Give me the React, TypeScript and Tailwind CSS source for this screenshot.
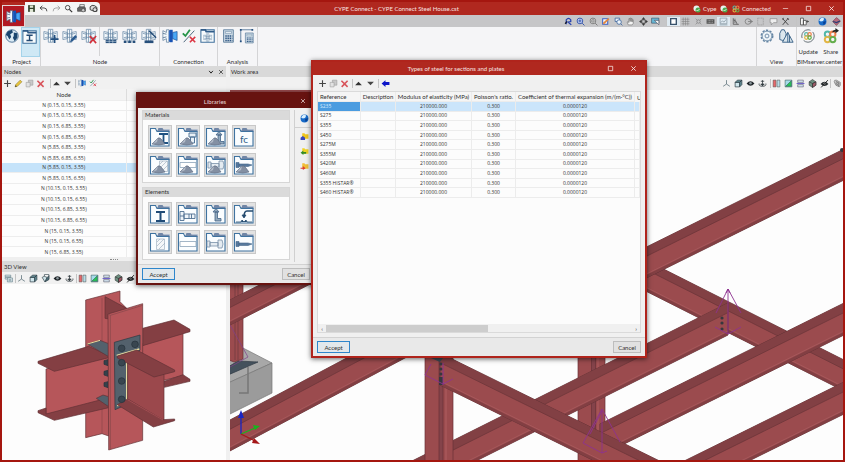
import type { ReactNode } from "react";

const glyphs: Record<string, ReactNode> = {
  save: <g fill="#33412b"><path d="M2 2h12v12H2z" /><path fill="#dfe6d5" d="M5 2.500h6v4H5zM5 9h6v5H5z" /></g>,
  undo: <path d="M6 3L2 7l4 4M2 7h7q5 0 5 6" fill="none" stroke="#333" strokeWidth="1.500" />,
  redo: <path d="M10 3l4 4-4 4M14 7H7q-5 0-5 6" fill="none" stroke="#999" strokeWidth="1.500" />,
  search: <g fill="none" stroke="#333" strokeWidth="1.500"><circle cx="6.500" cy="6.500" r="4" /><path strokeWidth="2.200" d="M9.500 9.500l5 5" /></g>,
  printer: <g fill="#666" stroke="#333"><path fill="#eee" d="M5 6V1h8v5" /><path d="M1 7l3-2h9l2 2v6H1z" /><circle cx="11" cy="11" r="3" fill="#ccc" /></g>,
  camera: <g fill="#ddd" stroke="#333" strokeWidth="1.600"><path d="M2 5q3-4 8-2l4 3v7H9L2 10z" /><circle cx="10.500" cy="10" r="3.500" /></g>,
  plus: <path d="M8 2v12M2 8h12" stroke="#444" strokeWidth="2" />,
  pencil: <g><path d="M3 10l8-8 3 3-8 8-4 1z" fill="#e8c53a" stroke="#8b7420" /><path d="M2 14l1-3 2 2z" fill="#333" /></g>,
  copy: <g fill="#c9c9c9" stroke="#999"><path d="M6 2h8v9H6z" /><path fill="#e2e2e2" d="M2 6h7v8H2z" /></g>,
  del: <path d="M2.500 3l11 11M13.500 3L3 14" stroke="#d8535a" strokeWidth="2.800" />,
  up: <path d="M2 11l6-6 6 6z" fill="#333" />,
  down: <path d="M2 5h12l-6 6z" fill="#444" />,
  left: <path d="M8 2L1 8l7 6v-3.500h7v-5H8z" fill="#0d16c9" />,
  close: <path d="M3 3l10 10M13 3L3 13" stroke="currentColor" strokeWidth="2" />,
  box: <path d="M3 3h10v10H3z" stroke="currentColor" strokeWidth="1.800" fill="none" />,
  min: <path d="M2 8h12" stroke="currentColor" strokeWidth="1.500" />,
  chev: <path d="M3 5l5 6 5-6" fill="none" stroke="#222" strokeWidth="2.600" />,
  axes: <path d="M8 2v7l-6 4M8 9l6 4" fill="none" stroke="#60747c" strokeWidth="1.400" />,
  cube: <g stroke="#33434b" strokeWidth="1.300"><path fill="#d0e6ec" d="M2 6h8v8H2z" /><path fill="#5f8891" d="M2 6l4-4h8l-4 4zM10 6l4-4v8l-4 4z" /></g>,
  cubes: <g stroke="#33434b" strokeWidth="1.200"><path fill="#fff" d="M6 1h8v8H6z" /><path fill="#cfe3e8" d="M2 6l4-2 5 2-4 8z" /><path fill="#4d6f7a" d="M11 6l3-3v7l-7 4z" /></g>,
  layers: <g fill="#e2ecef" stroke="#53727f"><path d="M2 2h10v3H2zM2 6h10v3H2z" /><path d="M6 7h9v7H6z" /><path d="M8 10h5M8 12h5" /></g>,
  eye: <g><path d="M1 8q7-8 14 0-7 8-14 0z" fill="#20262a" /><circle cx="8" cy="7.500" r="2.200" fill="#8d999d" /></g>,
  noeye: <g><path d="M1 9q7-8 14 0-7 7-14 0z" fill="#24292c" /><circle cx="8" cy="8" r="2" fill="#aaa" /><path d="M2 15L14 2" stroke="#111" strokeWidth="1.500" /></g>,
  turn: <g fill="none" stroke="#303a3f" strokeWidth="1.400"><path d="M8 2v10M5 4h6M2 8q-1 5 6 5t6-5" /><path fill="#303a3f" d="M5 9l3 3 3-3z" /></g>,
  secRed: <g stroke="#555"><path fill="#e8676a" d="M2 2h5v12H2z" /><path fill="#b5dde8" d="M9 2h5v12H9z" /></g>,
  secGreen: <g stroke="#355"><path fill="#a5dbe9" d="M2 2h12v12H2z" /><path fill="#26c755" d="M3 13L13 3v10z" /></g>,
  secBlue: <g stroke="#556"><path fill="#d3e4f0" d="M3 2h10v4H3zM3 10h10v4H3z" /><path d="M1 8h14" stroke="#7164c9" strokeWidth="2" /></g>,
  hex: <g stroke="#333"><path fill="#6c8f80" d="M8 1l6 4v6l-6 4-6-4V5z" /><path fill="#a05a68" d="M8 8l6-3v6l-6 4z" /><path d="M2 5l6 3v7M8 8l6-3" fill="none" /></g>,
  shells: <g fill="#ccc" stroke="#666"><path d="M2 5q0-4 4-3l7 4v5l-2 3-6-3z" /><path d="M5 4l7 5M4 7l7 5M7 3v9M10 5v8" /></g>,
  zoomF: <g stroke="#233fae" strokeWidth="2.200" fill="none"><path d="M4 13V5q4-5 8 0v3l-5 1 6 5" /><path d="M2 12l3-4" stroke="#111" /></g>,
  zoomA: <g stroke="#3152a9" strokeWidth="1.700" fill="#dbe6ff"><circle cx="7" cy="7" r="5" /><path d="M11 11l4 4M7 4v6M4 7h6" /></g>,
  zoomW: <g stroke="#666" strokeWidth="1.400" fill="#eee"><circle cx="7" cy="7" r="5" /><path d="M11 11l4 4M5 5h4v4H5z" /></g>,
  redraw: <g strokeWidth="1.800"><path d="M3 3h9v10H3z" fill="#f8f8f8" stroke="#345bc4" /><path d="M4 12L14 3" stroke="#e2873d" strokeWidth="3" /></g>,
  zoomP: <g stroke="#436a9f" strokeWidth="1.500" fill="#edf4fa"><path d="M2 2h8v6H2z" /><circle cx="9" cy="9" r="4" /><path d="M12 12l3 3" /></g>,
  hand: <path d="M4 14L2 9l2-1 1 2V3h2v5V2h2v6V3h2v6V5h2v6l-2 3z" fill="#f5f5f5" stroke="#666" />,
  move: <g fill="none" stroke="#333" strokeWidth="1.200"><path d="M8 1L6 4h4zM8 15l-2-3h4zM1 8l3-2v4zM15 8l-3-2v4z" fill="#444" /><path d="M5 5h6v6H5z" /></g>,
  full: <g><path d="M1 2h13v9H1z" fill="#67b7d5" stroke="#345" /><path d="M6 6h8v8z" fill="#f2f2f2" stroke="#445" /></g>,
  square: <path d="M3 3h10v10H3z" fill="#fff" stroke="#37516b" strokeWidth="2.400" />,
  grid: <path d="M4 1v14M8 1v14M12 1v14M1 4h14M1 8h14M1 12h14" stroke="#808080" />,
  snap: <g fill="none" stroke="#777" strokeWidth="1.200"><circle cx="8" cy="8" r="3" /><path d="M3 3l2 2M13 3l-2 2M3 13l2-2M13 13l-2-2" /></g>,
  keys: <g><path d="M1 4h14v8H1z" fill="#555" /><path d="M3 6.500h10M3 9.500h10" stroke="#ddd" strokeDasharray="1.500 1" /></g>,
  chart: <g fill="none" stroke="#8595a1" strokeWidth="1.300"><path d="M2 2h12v10H2zM1 14h14" /><path d="M3 10l3-3 3 2 4-5" /></g>,
  angle: <path d="M4 2v11h10M4 5q6 1 7 8M7 3v8" fill="none" stroke="#555" strokeWidth="1.300" />,
  arc: <g fill="none" stroke="#777" strokeWidth="1.300"><circle cx="7" cy="8" r="5" /><path d="M7 8h8M11 5l4 3-4 3" /></g>,
  dash: <path d="M3 2h10v12H3z" fill="none" stroke="#999" strokeWidth="1.300" strokeDasharray="2 1" />,
  note: <path d="M2 3h12v7H8l-4 4v-4H2z" fill="#eee" stroke="#777" />,
  tools: <path d="M3 3l10 11M13 2L3 14M2 4l3-2M11 2l3 3" stroke="#444" strokeWidth="1.700" />,
  panels: <g fill="#fff" stroke="#444" strokeWidth="1.400"><path d="M1 2h5v12H1zM6 6h5v8H6z" /><path d="M11 8h5M13 6v4" /></g>,
  globe: <g><circle cx="8" cy="8" r="7" fill="#176ac8" /><path d="M4 3q4-3 7 0L9 7 5 8 2 6z" fill="#d8efff" /><path d="M9 9l5-2q0 5-4 7z" fill="#083e91" /></g>,
  cyc: <g stroke="#743644"><path d="M8 1l7 6-7 8-7-7z" fill="#b66a7d" /><path d="M2 8l6 2 6-3" stroke="#243d75" strokeWidth="2" fill="none" /></g>,
  check: <g><circle cx="7" cy="7" r="6" fill="#e7f4ef" /><circle cx="10" cy="10" r="5" fill="#4eaa50" /><path d="M7 10l2 2 4-4" stroke="#fff" strokeWidth="1.500" fill="none" /></g>,
  bim: <g fill="none" strokeWidth="2.200"><circle cx="5" cy="5" r="3" stroke="#51b8a8" /><circle cx="11" cy="5" r="3" stroke="#ef7f49" /><circle cx="5" cy="11" r="3" stroke="#e2b646" /><circle cx="11" cy="11" r="3" stroke="#64ae4d" /></g>,
  folderUp: <g><path d="M4 5V2h4l1 2h6v8H4z" fill="#f0c61c" /><path d="M1 14v-4l4-3 4 3v4z" fill="#3847bc" /></g>,
  folderIn: <g><path d="M4 5V2h4l1 2h6v8H4z" fill="#f0d328" /><path d="M1 10l5-4v3h5v3H6v2z" fill="#338c25" /></g>,
  folderOut: <g><path d="M4 5V2h4l1 2h6v8H4z" fill="#f1bf37" /><path d="M10 11L5 7v3H1v2h4v2z" fill="#dd3c34" /></g>,
};

const joint = (
  <g fill="#f4f9fc" stroke="#6484a3" strokeWidth="0.8">
    <path d="M6 1.500h5V16H6zM1 4l5 1v7l-5 1zM16 4l-5 1v7l5 1z" />
    <path d="M2 6l4 1M2 11l4-1M15 6l-4 1M15 11l-4-1M8.500 2v14M6 6.500h5M6 10.500h5" />
  </g>
);

const blueJoint = (
  <g>
    <path d="M1 3l4 2V2h3v14H5v-4l-4 2z" fill="#f4f9fc" stroke="#5c7b98" strokeWidth="0.800" />
    <path d="M1 6l4 1M1 11l4-1" stroke="#5c7b98" />
    <path d="M8 3h3v12H8z" fill="#2f7be2" stroke="#1c4792" strokeWidth="0.700" />
    <path d="M12 5l5-1v10l-5-2z" fill="#49a6f5" stroke="#14478d" strokeWidth="0.700" />
    <path d="M9 2h3v14H9z" fill="#1753b5" />
  </g>
);

const folder = (
  <g>
    <path d="M1 2h15v14H1z" fill="#f7fbfd" stroke="#41719d" strokeWidth="1.200" />
    <path d="M1 2h5l1 2h9" fill="none" stroke="#315c89" strokeWidth="2" />
  </g>
);

const calc = (
  <g>
    <path d="M4 2h11v14H4z" fill="#cbd9e4" stroke="#5f7f9d" />
    <path d="M6 4h7v2H6z" fill="#f5fafc" stroke="#5f7f9d" strokeWidth="0.600" />
    <path d="M6 9h8M6 11.500h8M6 14h8" stroke="#2e5582" strokeWidth="1.600" strokeDasharray="1.600 0.800" />
  </g>
);

const ribbonGlyphs: Record<string, ReactNode> = {
  world: <g><circle cx="9" cy="9" r="7" fill="#dcebf5" stroke="#456b90" /><path d="M4 4l5-2 1 3-3 2 1 3-2 3-2-4-2-1zM11 5l4 1v5l-3 4-2-4 1-2z" fill="#1b456f" /></g>,
  profile: <g>{folder}<path d="M5 7h7M8.500 7v6M5 13h7" stroke="#244b74" strokeWidth="1.600" /></g>,
  nodeAdd: <g>{joint}<path d="M13 8v9M8.500 12.500h9" stroke="#234f7f" strokeWidth="2" /></g>,
  nodeEdit: <g>{joint}<path d="M9 16l1-3 5-5 2 2-5 5z" fill="#2b5a8e" /></g>,
  nodeDel: <g>{joint}<path d="M10 9l7 8M17 9l-7 8" stroke="#d2303a" strokeWidth="1.800" /></g>,
  nodeA: <g>{joint}<path d="M3 13h12v4H3z" fill="#274f7b" /><path d="M3 15h12M7 13v4M11 13v4" stroke="#dce8f2" strokeWidth="0.600" /></g>,
  nodeB: <g>{joint}<path d="M2 14h3v3H2zM7 14h3v3H7zM12 14h3v3h-3z" fill="#274f7b" /></g>,
  nodeC: <g>{joint}<path d="M4 14h10v3H4z" fill="#274f7b" /><path d="M9 3l8 8" stroke="#1f4875" strokeWidth="1.500" /></g>,
  conn: blueJoint,
  verify: <g fill="none"><path d="M2 6l3 3 5-7" stroke="#269449" strokeWidth="2" /><path d="M3 16L15 3" stroke="#39566f" /><path d="M10 10l6 6M16 10l-6 6" stroke="#dc3644" strokeWidth="1.800" /></g>,
  connFolder: <g>{folder}<g transform="translate(3.500 5.500) scale(0.600)">{joint}</g></g>,
  calc,
  calcSel: <g><path d="M2 15V2h13" fill="none" stroke="#44698f" strokeWidth="0.900" /><path d="M1 1h2v2H1zM14 1h2v2h-2zM1 14h2v2H1z" fill="#244f7e" /><g transform="translate(4 4) scale(0.800)">{calc}</g></g>,
  gear: <g fill="#eef4f8" stroke="#6585a3"><circle cx="9" cy="9" r="6.500" strokeWidth="1.600" strokeDasharray="2.500 1.600" /><circle cx="9" cy="9" r="5.500" /><circle cx="9" cy="9" r="2.200" /></g>,
  shapes: <g fill="#dce7ee" stroke="#315b83"><path d="M4 2h3l2 4v7q-4 2-7 0V6z" /><path d="M11 5l6 11H5z" /><path d="M11 5v11M13 9v7" /></g>,
  update: <g><circle cx="9" cy="9" r="7" fill="none" stroke="#58636a" strokeDasharray="16 3" /><g transform="translate(4 4) scale(0.620)">{glyphs.bim}</g></g>,
  share: <g><g transform="translate(0 2)">{glyphs.bim}</g><path d="M10 5q1-3 4-3V0l4 3-4 3V4z" fill="#222" /></g>,
};

function Icon({ name, className = "size-[9px]" }: { name: string; className?: string }) {
  return <svg viewBox="0 0 16 16" className={className} aria-hidden="true">{glyphs[name]}</svg>;
}

function Tool({ name }: { name: string }) {
  return (
    <button type="button" aria-label={name} className="flex flex-1 items-center justify-center">
      <Icon name={name} />
    </button>
  );
}

function Divider() {
  return <span className="h-[9px] w-px shrink-0 bg-[#c4c4c4]" />;
}

function RibbonButton({ name, active = false, label }: { name: string; active?: boolean; label?: string }) {
  return (
    <button
      type="button"
      aria-label={label ?? name}
      className={`flex h-[30px] flex-1 flex-col items-center pt-px ${active ? "border border-[#a5d3ea] bg-[#cfe8f5]" : ""}`}
    >
      <svg viewBox="0 0 18 18" className="size-[16px] shrink-0">{ribbonGlyphs[name]}</svg>
      {label && <span className="pt-1">{label}</span>}
    </button>
  );
}

function RibbonGroup({ title, className, children }: { title: string; className: string; children: ReactNode }) {
  return (
    <section className={`flex shrink-0 flex-col justify-between border-r border-[#d4d4d6] ${className}`}>
      <div className="flex">{children}</div>
      <h2 className="whitespace-nowrap pb-px text-center">{title}</h2>
    </section>
  );
}

const nodes = [
  "N (0.15, 0.15, 3.55)", "N (0.15, 0.15, 6.55)", "N (0.15, 6.85, 3.55)", "N (0.15, 6.85, 6.55)",
  "N (5.85, 6.85, 3.55)", "N (5.85, 6.85, 6.55)", "N (5.85, 0.15, 3.55)", "N (5.85, 0.15, 6.55)",
  "N (10.15, 0.15, 3.55)", "N (10.15, 0.15, 6.55)", "N (10.15, 6.85, 3.55)", "N (10.15, 6.85, 6.55)",
  "N (15, 0.15, 3.55)", "N (15, 0.15, 6.55)", "N (15, 6.85, 3.55)",
];

const steels = ["S235", "S275", "S355", "S450", "S275M", "S355M", "S420M", "S460M", "S355 HISTAR®", "S460 HISTAR®"];

function NodesPanel() {
  return (
    <section className="shrink-0">
      <div className="flex h-[11px] items-center bg-[#d9d9d9] px-0.5">
        <h2 className="flex-1">Nodes</h2>
        <button type="button" aria-label="Collapse" className="mr-1"><Icon name="chev" className="size-[6px]" /></button>
        <button type="button" aria-label="Close panel"><Icon name="close" className="size-[6px]" /></button>
      </div>
      <div className="flex h-[12px] items-center bg-[#f1f1f1]">
        <div className="flex w-[44px]"><Tool name="plus" /><Tool name="pencil" /><Tool name="copy" /><Tool name="del" /></div>
        <div className="ml-1 flex w-[23px] items-center"><Divider /><Tool name="up" /><Tool name="down" /></div>
        <div className="ml-0.5 flex w-[24px] items-center">
          <Divider />
          <button type="button" aria-label="Connect" className="flex flex-1 justify-center"><svg viewBox="0 0 18 18" className="size-[8px]">{blueJoint}</svg></button>
          <button type="button" aria-label="Verify" className="flex flex-1 justify-center"><svg viewBox="0 0 18 18" className="size-[8px]">{ribbonGlyphs.verify}</svg></button>
        </div>
      </div>
      <table className="h-[168px] w-full table-fixed border-collapse bg-[#fdfdfd] text-center">
        <colgroup><col className="w-[124px]" /><col /></colgroup>
        <thead>
          <tr className="h-[11px] bg-[#f3f3f3]"><th className="border-r border-[#dcdcdc] p-0 font-normal">Node</th><th className="p-0" /></tr>
        </thead>
        <tbody className="font-['Open_Sans',sans-serif] text-[5px]">
          {nodes.map((node, i) => (
            <tr key={node} className={i === 6 ? "bg-[#c5e3fa]" : "border-t border-[#ededed]"}>
              <td className="border-r border-[#ededed] p-0">{node}</td>
              <td className="p-0" />
            </tr>
          ))}
        </tbody>
      </table>
      <div className="flex h-[4px] items-center justify-center bg-[#efefef]"><span className="w-2 border-t border-dotted border-[#888]" /></div>
    </section>
  );
}

const RED = "#b6565a";
const DARK = "#843f43";
const STEEL = "#53616c";

function JointView() {
  return (
    <svg viewBox="6 0 672 525" preserveAspectRatio="xMinYMin meet" className="size-full" role="img" aria-label="3D joint">
      <g stroke="#603035" strokeWidth="2" strokeLinejoin="round">
        <path d="M257 48l103-27v32l20 20v300l-54 83-20-7-49 12z" fill={RED} />
        <path d="M315 38l65 35v40l-65-10z" fill={DARK} />
        <path d="M306 42v140M306 365v85" fill="none" stroke="#8c474a" />
        <path d="M425 180l124-33v128l-124 30z" fill={RED} />
        <path d="M428 133l94-25 48 28v7l-142 42z" fill={DARK} />
        <path d="M492 292l57-20 21 14v6l-77 18z" fill={DARK} />
        <path d="M138 255l188-50v145l-188 42z" fill={RED} />
        <path d="M114 232l152-45 60 28v6l-163 41-49-24z" fill={DARK} />
        <path d="M114 380l24-8v18l162-42 26 15v8l-163 38-49-23z" fill={DARK} />
        <path d="M262 180l38-11 26 10v39z" fill={STEEL} />
        <path d="M262 180l38-11" stroke="#e7db9c" strokeWidth="3" />
        <path d="M289 343l20-10 17 5v30z" fill={STEEL} />
        <g fill="#35414b" stroke="#26323b"><path d="M312 230l12-3v18l-12-4zM312 262l12-3v18l-12-4zM312 296l12-3v18l-12-4z" /></g>
        <path d="M324 90l104-31v410l-102 29z" fill={RED} />
        <path d="M324 90l7 4v402M331 94l97-30" fill="none" stroke="#84474a" />
        <path d="M343 175l77-22v46l-38 12v150l-37 16z" fill={STEEL} stroke="#2b3740" />
        <path d="M350 214l68-19M380 230v132l-29 3" fill="none" stroke="#e7dda2" strokeWidth="4" />
        <path d="M383 230l109 42v140l-109-57z" fill="#9b484c" />
        <path d="M352 216l58-18 114 60v5l-62 16-110-57z" fill={DARK} />
        <path d="M352 362l31-17 105 62 36-2v5l-64 19z" fill={DARK} />
        <path d="M383 347l106 61" stroke="#b6565a" />
        <g fill="#394650" stroke="#25323b">
          <circle cx="365" cy="193" r="10" /><circle cx="405" cy="181" r="10" /><circle cx="365" cy="236" r="10" /><circle cx="365" cy="291" r="10" /><circle cx="365" cy="346" r="10" />
        </g>
      </g>
    </svg>
  );
}

interface BeamProps {
  from: [number, number];
  to: [number, number];
  depth: number;
}

// A girder seen from above: shaded top flange, lit web and lower lip.
function Beam({ from: [x1, y1], to: [x2, y2], depth }: BeamProps) {
  const strip = (a: number, b: number) => `M${x1} ${y1 + a}L${x2} ${y2 + a}V${y2 + b}L${x1} ${y1 + b}z`;
  const line = (a: number) => `M${x1} ${y1 + a}L${x2} ${y2 + a}`;
  return (
    <g fill="none" strokeWidth="0.700">
      <path d={strip(0, depth)} fill="#9b4b4e" stroke="#542d31" />
      <path d={strip(0, depth * 0.3)} fill="#824044" />
      <path d={line(depth * 0.3)} stroke="#693338" />
      <path d={line(depth - 4)} stroke="#ab5d60" />
      <path d={strip(depth - 3, depth)} fill="#823f43" />
    </g>
  );
}

function Column({ x, y, width }: { x: number; y: number; width: number }) {
  return (
    <g stroke="#683238" strokeWidth="0.700">
      <path d={`M${x} ${y}h${width}v120h-${width}z`} fill="#9b4b4e" />
      <path d={`M${x + width / 2} ${y}h4v120h-4z`} fill="#84434a" />
      <path d={`M${x + width - 7} ${y}v120`} stroke="#b8696c" />
    </g>
  );
}

function Structure() {
  return (
    <svg viewBox="230 90 613 370" preserveAspectRatio="xMinYMin slice" className="size-full" role="img" aria-label="Steel structure">
      <Beam from={[228, 86]} to={[320, 86]} depth={12} />
      <g stroke="#777" strokeWidth="0.700">
        <path d="M228 352l15-4 29 15-44 20z" fill="#a8a8a8" />
        <path d="M228 383l44-20v30l-44 22z" fill="#9b9b9b" />
        <path d="M228 367l10-6 20 1-30 13z" fill="#44515c" stroke="#303b45" />
        <path d="M248 367v26h-9" fill="none" stroke="#777" strokeWidth="1.500" />
      </g>
      <path d="M229 270h14v89l-9 3-5-2z" fill="#9b4b4e" stroke="#683238" strokeWidth="0.700" />
      <path d="M235 270v90M238 270v90" stroke="#713b40" strokeWidth="0.800" />
      <path d="M230 325l18 32-18 10" fill="none" stroke="#81418c" strokeWidth="0.700" />
      <Beam from={[228, 301]} to={[330, 249]} depth={25} />
      <Beam from={[228, 421]} to={[420, 319]} depth={31} />
      <Column x={578} y={345} width={27} />
      <Beam from={[600, 237]} to={[846, 361]} depth={31} />
      <Beam from={[600, 270]} to={[846, 148]} depth={31} />
      <Beam from={[400, 467]} to={[728, 303]} depth={32} />
      <Column x={425} y={345} width={28} />
      <Beam from={[600, 424]} to={[846, 302]} depth={32} />
      <Beam from={[440, 353]} to={[680, 471]} depth={32} />
      <Beam from={[670, 468]} to={[846, 381]} depth={32} />
      <g fill="#35383e">
        <circle cx="722" cy="318" r="1.600" /><circle cx="722" cy="323" r="1.600" /><circle cx="722" cy="329" r="1.600" />
        <path d="M431 358h12l-3 4z" fill="#3c4a54" />
        <circle cx="441" cy="364" r="1.600" /><circle cx="441" cy="369" r="1.600" /><circle cx="441" cy="374" r="1.600" /><path d="M439 377h4v8h-4z" />
        <circle cx="842" cy="150" r="2" />
      </g>
      <g fill="none" stroke="#8d3290" strokeWidth="0.900">
        <path d="M728 334V289l-12 24M728 289l13 24M715 327l13 7 13-7M726 293l2-4 2 4" />
        <path d="M602 453v-44l-19 34 19 10 5-2M602 409l18 33M590 434l12-23" />
        <path d="M443 385v-22M431 364l-6 11 18 9 10-5" />
      </g>
      <g strokeWidth="1.300">
        <path d="M241 434v-17" stroke="#1825c4" /><path d="M238 418l3-8 3 8z" fill="#1825c4" />
        <path d="M241 434l14-6" stroke="#18b51d" /><path d="M253 425l7 1-5 4z" fill="#18b51d" />
        <path d="M241 434l14 7" stroke="#a51719" /><path d="M254 438l6 6-8-1z" fill="#a51719" />
      </g>
    </svg>
  );
}

const pile = (
  <g strokeWidth="0.600">
    <path d="M3 18l6-6q2-1 4 2l3 4q-6 2-13 0z" fill="#8490a3" stroke="#5b6880" />
    <path d="M9 12l-1 4-4 2z" fill="#b4bdca" />
  </g>
);
const bolt = <path d="M3 8.500h4v9H3zM3 13h4M7 11h11v4.500H7zM12 11v4.500M14.500 11v4.500" fill="#eef4f9" stroke="#507092" strokeWidth="0.900" />;
const plate = <path d="M3 10.500h16v5H3z" fill="#fff" stroke="#8ca3b9" strokeWidth="0.800" />;
const anchor = <path d="M8 9l3-3.500 3 3.500zM10 9v9h6v-2.500h-3.500V9z" fill="#94aabd" stroke="#416387" strokeWidth="0.800" />;
const nut = <path d="M2 10h3v6H2zM5 11.500h8v3.500H5zM13 9h4l1 4-1 4h-4z" fill="#e4ebf1" stroke="#7890a8" strokeWidth="0.800" />;
const screw = <path d="M3 10.500h3v5H3zM6 12h9l4 1-4 1.500H6z" fill="#57799d" stroke="#446789" strokeWidth="0.600" />;
const hatch = <path d="M7.500 8h8v10.500h-8zM8 11l3-3M8 15l7-7M10 18l6-6" fill="#f5f7f9" stroke="#96a8b9" strokeWidth="0.600" />;

const materials: [string, ReactNode][] = [
  ["Sections", <><path d="M10 8h9M14.500 8v9M11 17h8" stroke="#1f5282" strokeWidth="1.800" />{pile}</>],
  ["Bolts", <><path d="M12 7h7v4h-7zM13.500 11h4v6h-4z" fill="#e8f0f6" stroke="#456b91" strokeWidth="0.900" />{pile}</>],
  ["Anchors", <><g transform="translate(3 0)">{anchor}</g>{pile}</>],
  ["Concrete", <text x="11" y="17" textAnchor="middle" fontSize="10" fill="#315e88">fc</text>],
  ["Plates", <><g transform="translate(3 -1)">{hatch}</g>{pile}</>],
  ["Flat bars", <><g transform="translate(0 -2)">{plate}</g>{pile}</>],
  ["Nuts", <><g transform="translate(1 -2)">{nut}</g>{pile}</>],
  ["Screws", <><g transform="translate(0 -2)">{screw}</g>{pile}</>],
];

const elements: [string, ReactNode][] = [
  ["Section library", <path d="M7 9h9M11.500 9v9M7 18h9" stroke="#1f4b77" strokeWidth="2" />],
  ["Bolt library", bolt],
  ["Anchor library", anchor],
  ["Weld library", <><path d="M20 8h-6q-3 0-3 6" fill="none" stroke="#244b70" strokeWidth="1.600" /><path d="M9 12h4l-2 3zM3 19h5l1-2 2 2 2-2 1 2h5" fill="#244b70" stroke="#244b70" strokeWidth="0.800" /></>],
  ["Plate library", hatch],
  ["Flat bar library", plate],
  ["Nut library", nut],
  ["Screw library", screw],
];

function LibraryGroup({ title, items }: { title: string; items: [string, ReactNode][] }) {
  return (
    <section className="h-[73px] border border-[#d6d6d6] bg-[#fcfcfc]">
      <h3 className="h-[9px] bg-[#dadada] px-0.5 leading-[8px]">{title}</h3>
      <div className="grid w-fit grid-cols-4 gap-1 px-[5px] py-[5px]">
        {items.map(([name, art]) => (
          <button key={name} type="button" aria-label={name} className="size-[24px] border border-[#c8c8c8] bg-[#e2e2e2]">
            <svg viewBox="0 0 22 22" className="size-full">
              <path d="M1.500 3h18.500v17H1.500z" fill="#fafdff" />
              <path d="M8 5l1.500-3h4l1 1.500h6V6H9z" fill="#7186a6" />
              <path d="M1.500 20V2.500h5L8 5.500h12V20z" fill="none" stroke="#3f73a0" strokeWidth="1.100" />
              {art}
            </svg>
          </button>
        ))}
      </div>
    </section>
  );
}

function DialogFooter() {
  return (
    <div className="flex h-[19px] shrink-0 items-center justify-between border-t border-[#d2d2d2] bg-[#e9e9e9] px-1">
      <button type="button" className="h-[12px] w-[33px] border border-[#2e86cb] bg-[#e2e8ec] leading-[9px]">Accept</button>
      <button type="button" className="h-[12px] w-[28px] border border-[#bdbdbd] bg-[#e1e1e1] leading-[9px]">Cancel</button>
    </div>
  );
}

function LibrariesDialog() {
  return (
    <div role="dialog" aria-label="Libraries" className="absolute left-[134px] top-[92px] flex h-[193px] w-[180px] flex-col border-2 border-[#671310] bg-[#f0f0f0] shadow-[0_1px_5px_rgba(0,0,0,0.6)]">
      <div className="flex h-[14px] shrink-0 items-center bg-[#671310] text-[#ead9d8]">
        <h2 className="flex-1 text-center">Libraries</h2>
        <button type="button" aria-label="Close" className="flex w-[22px] justify-center"><Icon name="close" className="size-[6px]" /></button>
      </div>
      <div className="flex min-h-0 flex-1 pl-1">
        <div className="flex w-[148px] flex-col gap-1 pt-0.5">
          <LibraryGroup title="Materials" items={materials} />
          <LibraryGroup title="Elements" items={elements} />
        </div>
        <div className="my-0.5 ml-1 flex flex-1 flex-col items-center gap-1 border-l border-[#d0d0d0] pt-1">
          <button type="button" aria-label="Web"><Icon name="globe" /></button>
          <hr className="w-full border-[#d0d0d0]" />
          <div className="flex flex-col gap-1.5">
            <button type="button" aria-label="Open library"><Icon name="folderUp" /></button>
            <button type="button" aria-label="Import"><Icon name="folderIn" /></button>
            <button type="button" aria-label="Export"><Icon name="folderOut" /></button>
          </div>
        </div>
      </div>
      <DialogFooter />
    </div>
  );
}

function SteelDialog() {
  const cell = "border-r border-b border-[#ececec] p-0";
  return (
    <div role="dialog" aria-label="Types of steel for sections and plates" className="absolute left-[309px] top-[60px] flex h-[298px] w-[336px] flex-col border-2 border-[#b0241c] bg-[#f0f0f0] shadow-[0_1px_5px_rgba(0,0,0,0.6)]">
      <div className="flex h-[13px] shrink-0 items-center bg-[#b0281f] text-[#f6e3e1]">
        <h2 className="flex-1 text-center">Types of steel for sections and plates</h2>
        <button type="button" aria-label="Maximize" className="flex w-[22px] justify-center"><Icon name="box" className="size-[7px]" /></button>
        <button type="button" aria-label="Close" className="flex w-[24px] justify-center"><Icon name="close" className="size-[7px]" /></button>
      </div>
      <div className="flex h-[16px] shrink-0 items-center pl-1">
        <div className="flex w-[33px]"><Tool name="plus" /><Tool name="copy" /><Tool name="del" /></div>
        <div className="ml-0.5 flex w-[24px] items-center"><Divider /><Tool name="up" /><Tool name="down" /></div>
        <div className="ml-0.5 flex w-[14px] items-center"><Divider /><Tool name="left" /></div>
      </div>
      <div className="mx-1 mb-1 flex min-h-0 flex-1 flex-col border border-[#dadada] bg-[#fcfcfc]">
        <div className="min-h-0 flex-1 overflow-hidden">
          <table className="h-[106px] w-full table-fixed border-separate border-spacing-0 text-center">
            <colgroup>
              <col className="w-[43px]" /><col className="w-[35px]" /><col className="w-[76px]" /><col className="w-[44px]" /><col className="w-[119px]" /><col />
            </colgroup>
            <thead>
              <tr className="h-[10px] whitespace-nowrap bg-[#f5f5f5]">
                <th className={`${cell} pl-0.5 text-left font-normal`}>Reference</th>
                <th className={`${cell} font-normal`}>Description</th>
                <th className={`${cell} font-normal`}>Modulus of elasticity (MPa)</th>
                <th className={`${cell} font-normal`}>Poisson's ratio.</th>
                <th className={`${cell} font-normal`}>Coefficient of thermal expansion (m/(m·°C))</th>
                <th className="overflow-hidden p-0 pl-0.5 text-left font-normal">U</th>
              </tr>
            </thead>
            <tbody className="font-['Open_Sans',sans-serif] text-[5px]">
              {steels.map((steel, i) => (
                <tr key={steel} className={i === 0 ? "bg-[#cbe5fb]" : ""}>
                  <td className={`${cell} whitespace-nowrap pl-0.5 text-left ${i === 0 ? "bg-[#4b9ce0] text-[#d8ecff]" : ""}`}>{steel}</td>
                  <td className={cell} />
                  <td className={cell}>210000.000</td>
                  <td className={cell}>0.300</td>
                  <td className={cell}>0.0000120</td>
                  <td className={cell} />
                </tr>
              ))}
            </tbody>
          </table>
        </div>
        <div className="flex h-[8px] shrink-0 items-center bg-[#f0f0f0]">
          <button type="button" aria-label="Scroll left" className="w-[8px] leading-[7px]">‹</button>
          <div className="flex h-[7px] flex-1"><span className="w-[53%] bg-[#cdcdcd]" /></div>
          <button type="button" aria-label="Scroll right" className="w-[8px] leading-[7px]">›</button>
        </div>
      </div>
      <DialogFooter />
    </div>
  );
}

export default function App() {
  return (
    <div className="relative flex h-screen flex-col overflow-hidden border-x-2 border-b-2 border-[#a5160f] bg-[#f0f0f0] font-['Lato','Open_Sans',sans-serif] text-[6px] leading-[7px] text-[#303030]">
      <header className="flex h-[27px] shrink-0 border-t-2 border-[#a5160f] bg-[#c6c6c8]">
        <div className="flex w-[23px] shrink-0 items-end bg-[#b0281f]">
          <div className="flex h-[22px] w-full items-center justify-center border border-[#e2d5d5] bg-[#b21822]">
            <svg viewBox="0 0 18 18" className="size-[15px]">{blueJoint}</svg>
          </div>
        </div>
        <div className="flex min-w-0 flex-1 flex-col">
          <div className="flex h-[13px] shrink-0 items-center bg-[#b0281f] text-[#f8e3e1]">
            <div className="flex h-full w-[75px] items-center rounded-tr-sm bg-[#f5f5f5]">
              <Tool name="save" /><Tool name="undo" /><Tool name="redo" /><Tool name="search" /><Tool name="printer" /><Tool name="camera" />
            </div>
            <h1 className="flex-1 text-center">CYPE Connect - CYPE Connect Steel House.cst</h1>
            <div className="flex w-[150px] shrink-0 items-center">
              <span className="flex w-[27px] items-center gap-0.5"><Icon name="check" className="size-[8px]" />Cype</span>
              <Icon name="check" className="size-[8px]" />
              <span className="ml-1 flex flex-1 items-center gap-0.5"><Icon name="bim" className="size-[8px]" />Connected</span>
              <button type="button" aria-label="Minimize" className="flex w-[23px] justify-center"><Icon name="min" className="size-[7px]" /></button>
              <button type="button" aria-label="Maximize" className="flex w-[23px] justify-center"><Icon name="box" className="size-[7px]" /></button>
              <button type="button" aria-label="Close" className="flex w-[23px] justify-center"><Icon name="close" className="size-[7px]" /></button>
            </div>
          </div>
          <div className="flex flex-1 items-center justify-end">
            <div className="flex w-[100px]">
              <Tool name="zoomF" /><Tool name="zoomA" /><Tool name="zoomW" /><Tool name="redraw" /><Tool name="zoomP" /><Tool name="hand" /><Tool name="move" /><Tool name="full" />
            </div>
            <div className="ml-1 flex w-[126px] items-center">
              <Divider />
              <span className="flex flex-1 bg-[#dfeaf2]"><Tool name="square" /></span><Tool name="grid" /><Tool name="snap" /><Tool name="keys" />
              <span className="flex flex-1 bg-[#dfeaf2]"><Tool name="chart" /></span><Tool name="angle" /><Tool name="arc" /><Tool name="dash" /><Tool name="note" /><Tool name="tools" />
            </div>
            <div className="ml-1 flex w-[16px] items-center"><Divider /><Tool name="panels" /></div>
            <div className="ml-0.5 flex w-[29px] items-center"><Divider /><Tool name="globe" /><Tool name="cyc" /></div>
          </div>
        </div>
      </header>

      <nav className="flex h-[39px] shrink-0 bg-[#f5f5f7]" aria-label="Ribbon">
        <RibbonGroup title="Project" className="w-[39px] pl-px"><RibbonButton name="world" /><RibbonButton name="profile" active /></RibbonGroup>
        <RibbonGroup title="Node" className="w-[119px] px-px">
          <RibbonButton name="nodeAdd" /><RibbonButton name="nodeEdit" /><RibbonButton name="nodeDel" />
          <span className="mx-px h-[29px] w-px bg-[#d4d4d6]" />
          <RibbonButton name="nodeA" /><RibbonButton name="nodeB" /><RibbonButton name="nodeC" />
        </RibbonGroup>
        <RibbonGroup title="Connection" className="w-[58px]"><RibbonButton name="conn" /><RibbonButton name="verify" /><RibbonButton name="connFolder" /></RibbonGroup>
        <RibbonGroup title="Analysis" className="w-[40px]"><RibbonButton name="calc" /><RibbonButton name="calcSel" /></RibbonGroup>
        <div className="flex-1 border-r border-[#d4d4d6]" />
        <RibbonGroup title="View" className="w-[40px]"><RibbonButton name="gear" /><RibbonButton name="shapes" /></RibbonGroup>
        <RibbonGroup title="BIMserver.center" className="w-[46px]"><RibbonButton name="update" label="Update" /><RibbonButton name="share" label="Share" /></RibbonGroup>
      </nav>

      <main className="flex min-h-0 flex-1">
        <aside className="flex w-[224px] shrink-0 flex-col">
          <NodesPanel />
          <section className="flex min-h-0 flex-1 flex-col">
            <h2 className="h-[11px] shrink-0 bg-[#d9d9d9] px-0.5 leading-[11px]">3D View</h2>
            <div className="flex h-[12px] shrink-0 items-center bg-[#f1f1f1]">
              <div className="flex w-[12px]"><Tool name="layers" /></div>
              <div className="ml-px flex w-[60px] items-center"><Divider /><Tool name="axes" /><Tool name="cube" /><Tool name="cubes" /><Tool name="eye" /><Tool name="turn" /></div>
              <div className="ml-px flex w-[60px] items-center"><Divider /><Tool name="secRed" /><Tool name="secGreen" /><Tool name="secBlue" /><Tool name="hex" /><Tool name="noeye" /></div>
            </div>
            <div className="min-h-0 flex-1 bg-[#fdfdfd]"><JointView /></div>
          </section>
        </aside>
        <section className="ml-1 flex min-w-0 flex-1 flex-col">
          <h2 className="h-[11px] shrink-0 bg-[#d9d9d9] px-px leading-[11px]">Work area</h2>
          <div className="flex h-[13px] shrink-0 items-center justify-end bg-[#f1f1f1]">
            <div className="flex w-[48px]"><Tool name="axes" /><Tool name="cube" /><Tool name="eye" /><Tool name="turn" /></div>
            <div className="ml-0.5 flex w-[60px] items-center"><Divider /><Tool name="secRed" /><Tool name="secGreen" /><Tool name="secBlue" /><Tool name="hex" /><Tool name="noeye" /></div>
            <div className="flex w-[13px] items-center"><Divider /><Tool name="shells" /></div>
          </div>
          <div className="min-h-0 flex-1 bg-[#fdfdfd]"><Structure /></div>
        </section>
      </main>

      <LibrariesDialog />
      <SteelDialog />
    </div>
  );
}
